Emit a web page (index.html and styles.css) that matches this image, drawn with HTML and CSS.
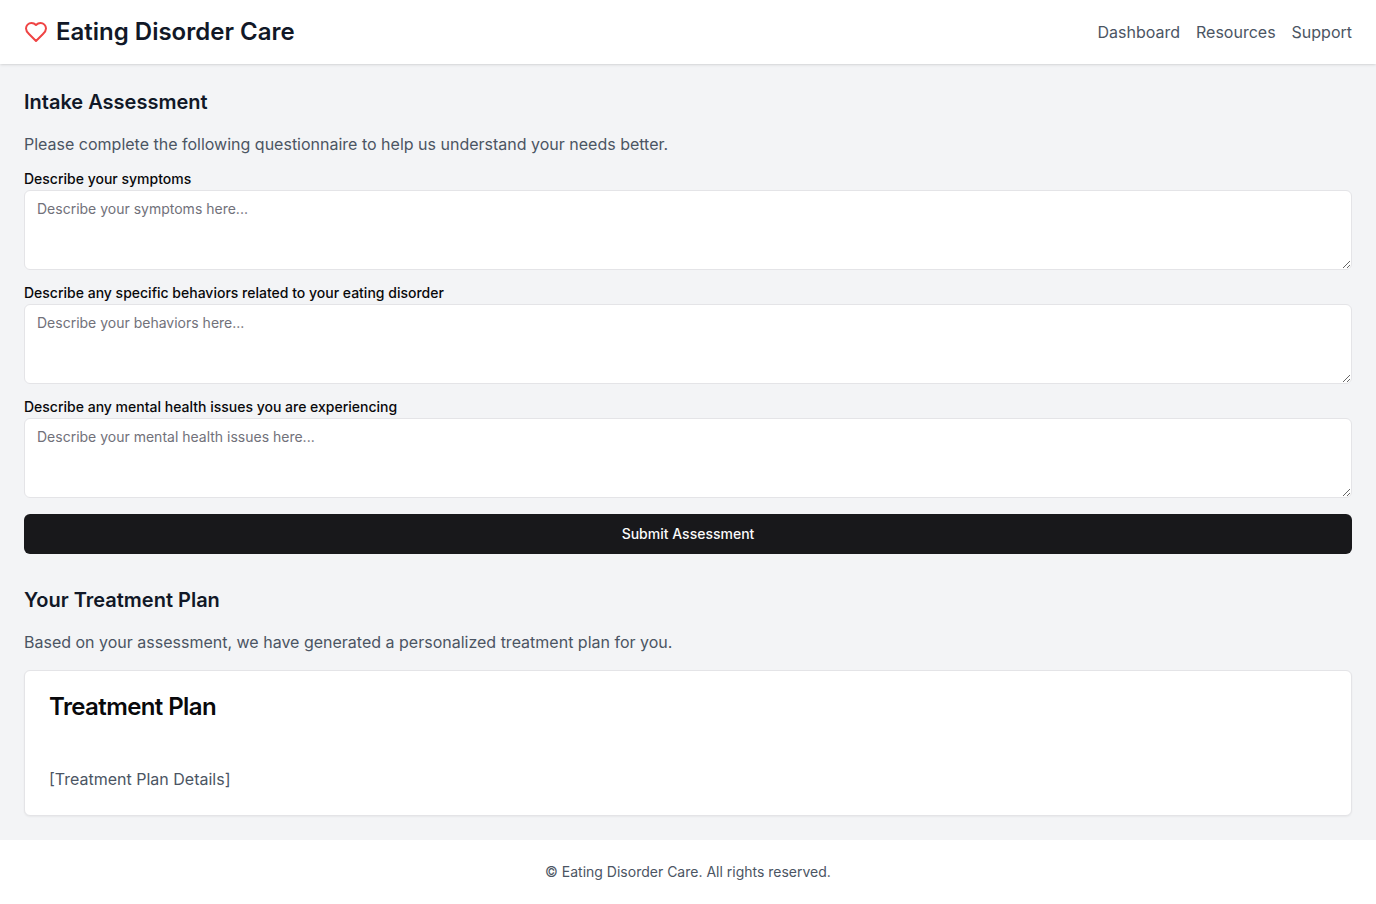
FILE: index.html
```html
<!DOCTYPE html>
<html lang="en">
<head>
<meta charset="utf-8">
<meta name="viewport" content="width=device-width, initial-scale=1">
<title>Eating Disorder Care</title>
<link rel="stylesheet" href="styles.css">
</head>
<body>
<div class="page">
  <header class="header">
    <div class="brand">
      <svg class="brand-icon" viewBox="0 0 24 24" aria-hidden="true"><path d="M19 14c1.49-1.46 3-3.21 3-5.5A5.5 5.5 0 0 0 16.5 3c-1.76 0-3 .5-4.5 2-1.5-1.5-2.74-2-4.5-2A5.5 5.5 0 0 0 2 8.5c0 2.3 1.5 4.05 3 5.5l7 7Z"/></svg>
      <h1 class="brand-name">Eating Disorder Care</h1>
    </div>
    <nav class="nav">
      <a class="nav-link" href="#">Dashboard</a>
      <a class="nav-link" href="#">Resources</a>
      <a class="nav-link" href="#">Support</a>
    </nav>
  </header>
  <main class="main">
    <section class="section">
      <h2 class="section-title">Intake Assessment</h2>
      <p class="section-text">Please complete the following questionnaire to help us understand your needs better.</p>
      <form class="form">
        <div class="field">
          <label class="label" for="symptoms">Describe your symptoms</label>
          <textarea class="textarea" id="symptoms" placeholder="Describe your symptoms here..."></textarea>
        </div>
        <div class="field">
          <label class="label" for="behaviors">Describe any specific behaviors related to your eating disorder</label>
          <textarea class="textarea" id="behaviors" placeholder="Describe your behaviors here..."></textarea>
        </div>
        <div class="field">
          <label class="label" for="mental-health">Describe any mental health issues you are experiencing</label>
          <textarea class="textarea" id="mental-health" placeholder="Describe your mental health issues here..."></textarea>
        </div>
        <button class="submit" type="button">Submit Assessment</button>
      </form>
    </section>
    <section class="section">
      <h2 class="section-title">Your Treatment Plan</h2>
      <p class="section-text">Based on your assessment, we have generated a personalized treatment plan for you.</p>
      <article class="card">
        <h3 class="card-title">Treatment Plan</h3>
        <p class="card-text">[Treatment Plan Details]</p>
      </article>
    </section>
  </main>
  <footer class="footer">
    <p class="copyright">© Eating Disorder Care. All rights reserved.</p>
  </footer>
</div>
</body>
</html>
```

FILE: styles.css
```css
*, *::before, *::after {
  box-sizing: border-box;
}

body, h1, h2, h3, p {
  margin: 0;
}

body {
  font-family: Inter, "Liberation Sans", sans-serif;
  font-size: 16px;
  line-height: 24px;
  color: #09090b;
}

.page {
  display: flex;
  flex-direction: column;
  min-height: 100vh;
  background: #f3f4f6;
}

.header {
  display: flex;
  align-items: center;
  justify-content: space-between;
  padding: 16px 24px;
  background: #fff;
  box-shadow: 0 1px 3px rgba(0, 0, 0, 0.1), 0 1px 2px -1px rgba(0, 0, 0, 0.1);
}

.brand {
  display: flex;
  align-items: center;
  gap: 8px;
}

.brand-icon {
  width: 24px;
  height: 24px;
  fill: none;
  stroke: #ef4444;
  stroke-width: 2;
  stroke-linecap: round;
  stroke-linejoin: round;
}

.brand-name {
  font-size: 24px;
  line-height: 32px;
  font-weight: 600;
  color: #111827;
}

.nav {
  display: flex;
  gap: 16px;
}

.nav-link {
  color: #4b5563;
  text-decoration: none;
}

.main {
  flex: 1;
  display: flex;
  flex-direction: column;
  gap: 32px;
  padding: 24px;
}

.section-title {
  margin-bottom: 16px;
  font-size: 20px;
  line-height: 28px;
  font-weight: 600;
  color: #111827;
}

.section-text {
  margin-bottom: 16px;
  color: #4b5563;
}

.form {
  display: flex;
  flex-direction: column;
  gap: 16px;
}

.field {
  display: flex;
  flex-direction: column;
  gap: 4px;
}

.label {
  font-size: 14px;
  line-height: 14px;
  font-weight: 500;
}

.textarea {
  display: block;
  width: 100%;
  min-height: 80px;
  padding: 8px 12px;
  border: 1px solid #e4e4e7;
  border-radius: 6px;
  background: #fff;
  color: inherit;
  font: inherit;
  font-size: 14px;
  line-height: 20px;
  resize: vertical;
}

.textarea::placeholder {
  color: #71717a;
}

.submit {
  height: 40px;
  padding: 8px 16px;
  border: 0;
  border-radius: 6px;
  background: #18181b;
  color: #fafafa;
  font: inherit;
  font-size: 14px;
  line-height: 20px;
  font-weight: 500;
}

.card {
  padding: 24px;
  border: 1px solid #e4e4e7;
  border-radius: 6px;
  background: #fff;
  box-shadow: 0 1px 2px rgba(0, 0, 0, 0.05);
}

.card-title {
  margin-bottom: 48px;
  font-size: 24px;
  line-height: 24px;
  font-weight: 600;
  letter-spacing: -0.025em;
}

.card-text {
  color: #4b5563;
}

.footer {
  padding: 22px 24px;
  background: #fff;
  text-align: center;
}

.copyright {
  font-size: 14px;
  line-height: 20px;
  color: #4b5563;
}
```
